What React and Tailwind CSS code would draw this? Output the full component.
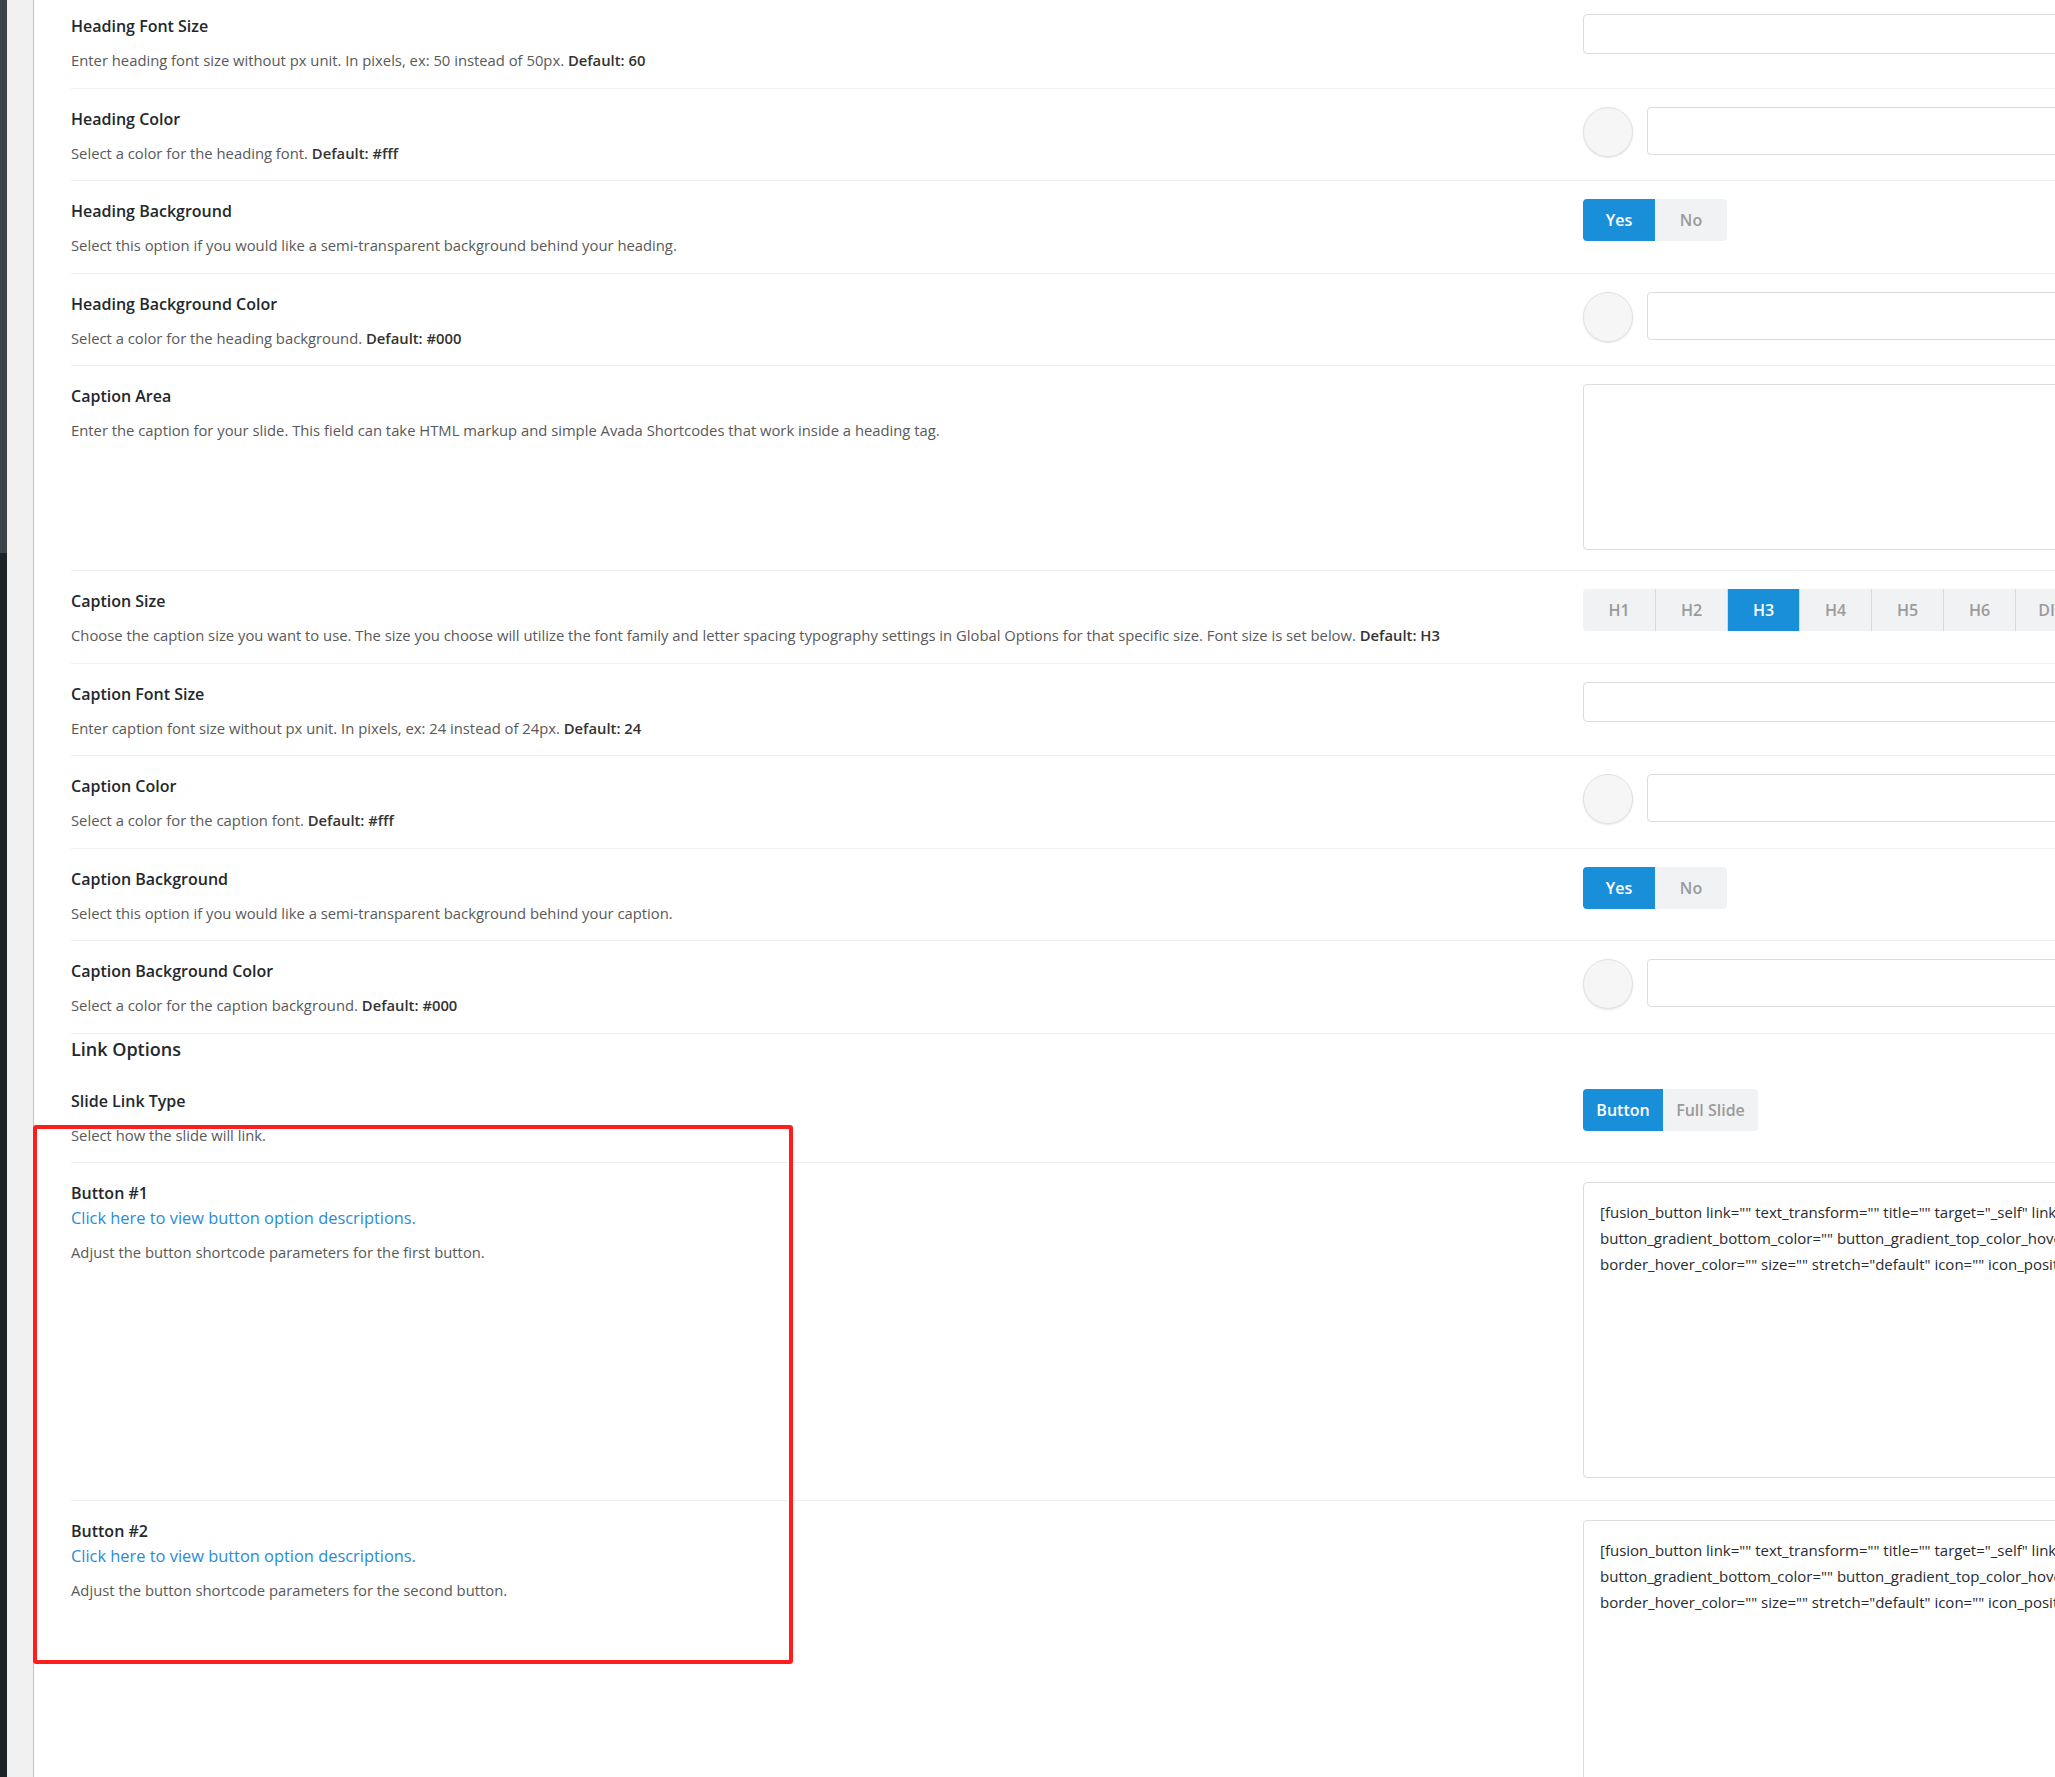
import React from "react";

const rows = [
  {
    title: "Heading Font Size",
    desc: "Enter heading font size without px unit. In pixels, ex: 50 instead of 50px.",
    def: "60",
    control: "input",
  },
  { title: "Heading Color", desc: "Select a color for the heading font.", def: "#fff", control: "color" },
  {
    title: "Heading Background",
    desc: "Select this option if you would like a semi-transparent background behind your heading.",
    control: "yesno",
  },
  { title: "Heading Background Color", desc: "Select a color for the heading background.", def: "#000", control: "color" },
  {
    title: "Caption Area",
    desc: "Enter the caption for your slide. This field can take HTML markup and simple Avada Shortcodes that work inside a heading tag.",
    control: "textarea",
  },
  {
    title: "Caption Size",
    desc: "Choose the caption size you want to use. The size you choose will utilize the font family and letter spacing typography settings in Global Options for that specific size. Font size is set below.",
    def: "H3",
    control: "sizes",
  },
  {
    title: "Caption Font Size",
    desc: "Enter caption font size without px unit. In pixels, ex: 24 instead of 24px.",
    def: "24",
    control: "input",
  },
  { title: "Caption Color", desc: "Select a color for the caption font.", def: "#fff", control: "color" },
  {
    title: "Caption Background",
    desc: "Select this option if you would like a semi-transparent background behind your caption.",
    control: "yesno",
  },
  { title: "Caption Background Color", desc: "Select a color for the caption background.", def: "#000", control: "color" },
];

const shortcode = [
  '[fusion_button link="" text_transform="" title="" target="_self" link_attributes="" alignment="" modal="" hide_on_mobile="small-visibility,medium-visibility,large-visibility" class="" id="" color="default" button_gradient_top_color=""',
  'button_gradient_bottom_color="" button_gradient_top_color_hover="" button_gradient_bottom_color_hover="" accent_color="" accent_hover_color="" type="" bevel_color="" border_width="" border_radius=""',
  'border_hover_color="" size="" stretch="default" icon="" icon_position="left" icon_divider="no" animation_type="" animation_direction="left" animation_speed="0.3" animation_offset=""]Button Text[/fusion_button]',
];

const sizes = ["H1", "H2", "H3", "H4", "H5", "H6", "DIV", "P"];

const Toggle = ({ options, widths }) => (
  <div className="flex h-[42px] rounded-[4px] overflow-hidden w-fit">
    {options.map((opt, i) => (
      <div
        key={opt}
        className={`flex items-center justify-center text-[16px] font-semibold ${widths[i]} ${
          i === 0 ? "bg-[#1a8fd9] text-white" : "bg-[#f1f2f4] text-[#9a9a9a]"
        }`}
      >
        {opt}
      </div>
    ))}
  </div>
);

const Control = ({ type }) => {
  if (type === "input") {
    return <div className="h-[40px] w-[900px] rounded-[4px] border border-[#dcdcdc] bg-white" />;
  }
  if (type === "color") {
    return (
      <div className="flex items-start gap-[14px]">
        <div className="h-[50px] w-[50px] shrink-0 rounded-full border border-[#e2e2e2] bg-[#f6f6f6] shadow-[0_1px_2px_rgba(0,0,0,0.1)]" />
        <div className="h-[48px] w-[900px] rounded-[4px] border border-[#dcdcdc] bg-white" />
      </div>
    );
  }
  if (type === "yesno") {
    return <Toggle options={["Yes", "No"]} widths={["w-[72px]", "w-[72px]"]} />;
  }
  if (type === "textarea") {
    return <div className="mb-[2.5px] h-[166px] w-[900px] rounded-[4px] border border-[#dcdcdc] bg-white" />;
  }
  if (type === "sizes") {
    return (
      <div className="flex h-[42px] w-fit overflow-hidden rounded-[4px]">
        {sizes.map((s, i) => (
          <div
            key={s}
            className={`flex w-[72px] items-center justify-center text-[16px] font-semibold ${
              s === "H3" ? "bg-[#1a8fd9] text-white" : "bg-[#f1f2f4] text-[#9a9a9a]"
            } ${i > 0 ? "border-l border-[#dadada]" : ""}`}
          >
            {s}
          </div>
        ))}
      </div>
    );
  }
  return null;
};

const Row = ({ title, desc, def, control }) => (
  <div className="flex border-b border-[#efefef] pt-[18px] pb-[17.5px]">
    <div className="w-[1512px] shrink-0">
      <h3 className="text-[16px] font-semibold leading-6 text-[#23282d]">{title}</h3>
      <p className="mt-[12px] text-[14.8px] leading-5 text-[#595959]">
        {desc}
        {def && <strong className="font-semibold text-[#333]"> Default: {def}</strong>}
      </p>
    </div>
    <div className="shrink-0">
      <Control type={control} />
    </div>
  </div>
);

const ButtonRow = ({ title, which, last }) => (
  <div className={`flex pt-[18px] pb-[17.5px] ${last ? "" : "border-b border-[#efefef]"}`}>
    <div className="w-[1512px] shrink-0">
      <h3 className="text-[16px] font-semibold leading-6 text-[#23282d]">{title}</h3>
      <a className="mt-[1px] block text-[16.4px] leading-6 text-[#2a8bd6]">
        Click here to view button option descriptions.
      </a>
      <p className="mt-[12px] text-[14.8px] leading-5 text-[#595959]">
        Adjust the button shortcode parameters for the {which} button.
      </p>
    </div>
    <div className="shrink-0 pt-[1px]">
      <div className="mb-[4.5px] h-[296px] w-[900px] overflow-hidden rounded-[4px] border border-[#dcdcdc] bg-white px-[16px] pt-[16px]">
        {shortcode.map((line) => (
          <div key={line} className="whitespace-nowrap text-[15px] leading-[26px] text-[#272b30]">
            {line}
          </div>
        ))}
      </div>
    </div>
  </div>
);

export default function App() {
  return (
    <div className="relative flex h-screen w-full overflow-hidden bg-white font-['Open_Sans',sans-serif]">
      <div className="flex w-[7px] shrink-0 flex-col">
        <div className="h-[553px] bg-[#3c434a]" />
        <div className="flex-1 bg-[#1d2327]" />
      </div>
      <div className="w-[27px] shrink-0 border-r border-[#c3c4c7] bg-[#f0f0f1]" />
      <main className="-mt-[4px] min-w-0 flex-1 overflow-hidden pl-[37px]">
        {rows.map((r) => (
          <Row key={r.title} {...r} />
        ))}

        <h2 className="pt-[3px] pb-[10px] text-[18px] font-semibold leading-6 text-[#23282d]">Link Options</h2>

        <div className="flex border-b border-[#efefef] pt-[18px] pb-[17.5px]">
          <div className="w-[1512px] shrink-0">
            <h3 className="text-[16px] font-semibold leading-6 text-[#23282d]">Slide Link Type</h3>
            <p className="mt-[12px] text-[14.8px] leading-5 text-[#595959]">Select how the slide will link.</p>
          </div>
          <div className="shrink-0">
            <Toggle options={["Button", "Full Slide"]} widths={["w-[80px]", "w-[95px]"]} />
          </div>
        </div>

        <ButtonRow title="Button #1" which="first" />
        <ButtonRow title="Button #2" which="second" last />
      </main>

      <div className="pointer-events-none absolute left-[33px] top-[1125px] h-[539px] w-[760px] rounded-[3px] border-[4px] border-[#ff1e1e]" />
    </div>
  );
}
